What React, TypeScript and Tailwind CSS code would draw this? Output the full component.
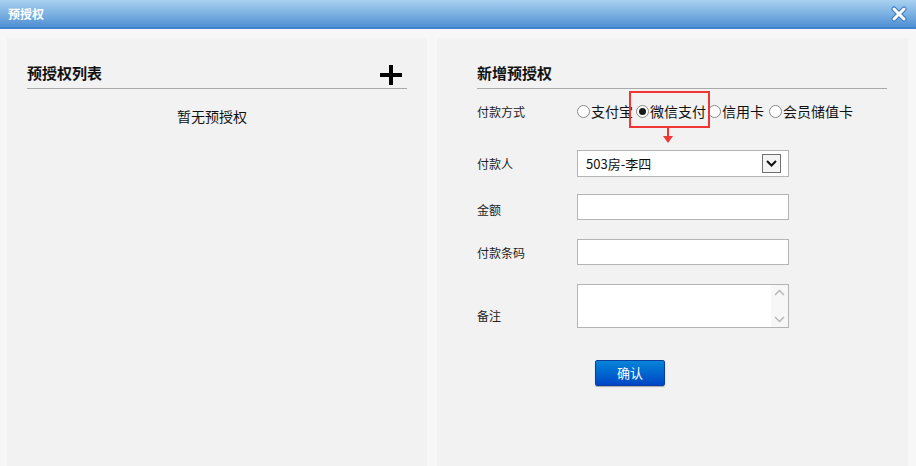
const font = { fontFamily: '"Noto Sans CJK SC", "Liberation Sans", sans-serif' };

function Radio({ label, checked = false }: { label: string; checked?: boolean }) {
  return (
    <label className="flex items-center">
      <span className="w-[13px] h-[13px] rounded-full border border-[#8a8a8a] bg-white flex items-center justify-center mr-[1px]">
        {checked && <span className="w-[7px] h-[7px] rounded-full bg-[#1a1a1a]" />}
      </span>
      <span className="text-[14px] text-[#111]">{label}</span>
    </label>
  );
}

function Row({ label, labelClass = '', children, className = '' }: { label: string; labelClass?: string; children: React.ReactNode; className?: string }) {
  return (
    <div className={`flex ${className}`}>
      <div className={`w-[100px] text-[12px] text-[#222] ${labelClass}`}>{label}</div>
      {children}
    </div>
  );
}

export default function App() {
  return (
    <div className="w-[916px] h-[466px] bg-[#f7f7f7] overflow-hidden flex flex-col" style={font}>
      {/* Title bar */}
      <div className="h-[29px] shrink-0 flex items-center justify-between pl-[8px] pr-[9px] bg-gradient-to-b from-[#a9d0f0] via-[#7db2e3] to-[#4f8fd3] border-b-2 border-[#3f84cf]">
        <span className="text-[12px] text-white font-bold">预授权</span>
        <svg width="16" height="16" viewBox="0 0 16 16">
          <path d="M3 3 L13 13 M13 3 L3 13" stroke="#3a78c0" strokeWidth="5" strokeLinecap="round" />
          <path d="M3 3 L13 13 M13 3 L3 13" stroke="#fff" strokeWidth="3" strokeLinecap="round" />
        </svg>
      </div>

      <div className="flex-1 flex gap-[10px] pl-[7px] pt-[9px]">
        {/* Left panel */}
        <div className="w-[420px] bg-[#f2f2f2] px-[20px]">
          <div className="mt-[24px] flex items-end justify-between border-b border-[#aaaaaa] h-[27px]">
            <span className="text-[15px] font-bold text-[#111] leading-none pb-[8px]">预授权列表</span>
            <svg width="22" height="20" viewBox="0 0 22 20" className="mr-[5px] mb-[3px]">
              <rect x="0" y="8" width="22" height="4" fill="#000" />
              <rect x="9" y="0" width="4" height="20" fill="#000" />
            </svg>
          </div>
          <div className="text-center text-[14px] text-[#111] mt-[17px] pr-[10px]">暂无预授权</div>
        </div>

        {/* Right panel */}
        <div className="w-[471px] bg-[#f2f2f2] pl-[40px] pr-[21px]">
          <div className="mt-[24px] border-b border-[#aaaaaa] h-[27px] flex items-end">
            <span className="text-[15px] font-bold text-[#111] leading-none pb-[8px]">新增预授权</span>
          </div>

          <Row label="付款方式" className="mt-[7px] h-[31px] items-center">
            <div className="flex items-center">
              <Radio label="支付宝" />
              <div className="relative ml-[3px] mr-[2px]">
                <Radio label="微信支付" checked />
                <div className="absolute left-[-7px] top-[-10px] w-[81px] h-[37px] border-2 border-[#f03535]" />
                <div className="absolute left-[27px] top-[27px] flex flex-col items-center">
                  <div className="w-[2px] h-[8px] bg-[#f03535]" />
                  <svg width="10" height="7" viewBox="0 0 10 7">
                    <polygon points="0,0 10,0 5,7" fill="#f03535" />
                  </svg>
                </div>
              </div>
              <Radio label="信用卡" />
              <div className="ml-[5px]">
                <Radio label="会员储值卡" />
              </div>
            </div>
          </Row>

          <Row label="付款人" className="mt-[23px] items-center">
            <div className="w-[212px] h-[27px] bg-white border border-[#b4b4b4] flex items-center justify-between pl-[8px] pr-[7px]">
              <span className="text-[13px] text-[#111]">503房-李四</span>
              <div className="w-[19px] h-[19px] border border-[#707070] bg-[#f4f4f4] flex items-center justify-center">
                <svg width="11" height="7" viewBox="0 0 11 7">
                  <path d="M1 1 L5.5 5.5 L10 1" stroke="#111" strokeWidth="2" fill="none" />
                </svg>
              </div>
            </div>
          </Row>

          <Row label="金额" labelClass="pt-[7px]" className="mt-[17px]">
            <div className="w-[212px] h-[26px] bg-white border border-[#b4b4b4]" />
          </Row>

          <Row label="付款条码" labelClass="pt-[5px]" className="mt-[19px]">
            <div className="w-[212px] h-[26px] bg-white border border-[#b4b4b4]" />
          </Row>

          <Row label="备注" labelClass="self-end pb-[3px]" className="mt-[19px]">
            <div className="w-[212px] h-[44px] bg-white border border-[#b4b4b4] flex justify-end">
              <div className="w-[17px] bg-[#f7f7f7] flex flex-col items-center justify-between py-[4px]">
                <svg width="11" height="7" viewBox="0 0 11 7">
                  <path d="M1 6 L5.5 1.5 L10 6" stroke="#b8b8b8" strokeWidth="1.5" fill="none" />
                </svg>
                <svg width="11" height="7" viewBox="0 0 11 7">
                  <path d="M1 1 L5.5 5.5 L10 1" stroke="#b8b8b8" strokeWidth="1.5" fill="none" />
                </svg>
              </div>
            </div>
          </Row>

          <div className="mt-[31px] pl-[118px]">
            <button className="w-[70px] h-[26px] rounded-[2px] bg-gradient-to-b from-[#0b84d8] to-[#0045c6] border border-[#0a3fa0] text-white text-[13px] shadow-[0_1px_1px_rgba(0,0,0,0.3)]">
              确认
            </button>
          </div>
        </div>
      </div>
    </div>
  );
}
